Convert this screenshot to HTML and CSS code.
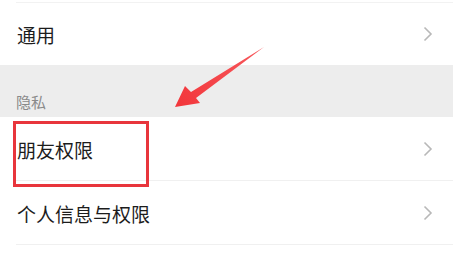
FILE: index.html
```html
<!DOCTYPE html>
<html lang="zh">
<head>
<meta charset="utf-8">
<link rel="stylesheet" href="styles.css">
</head>
<body>
<div class="page">
  <div class="top-gap"></div>
  <div class="row first">
    <span class="label">通用</span>
    <svg class="chev" width="10" height="16" viewBox="0 0 10 16"><polyline points="1.5,1.5 8,8 1.5,14.5" fill="none" stroke="#b8b8b8" stroke-width="1.6"/></svg>
  </div>
  <div class="section"><span>隐私</span></div>
  <div class="row">
    <span class="label">朋友权限</span>
    <svg class="chev" width="10" height="16" viewBox="0 0 10 16"><polyline points="1.5,1.5 8,8 1.5,14.5" fill="none" stroke="#b8b8b8" stroke-width="1.6"/></svg>
  </div>
  <div class="row">
    <span class="label">个人信息与权限</span>
    <svg class="chev" width="10" height="16" viewBox="0 0 10 16"><polyline points="1.5,1.5 8,8 1.5,14.5" fill="none" stroke="#b8b8b8" stroke-width="1.6"/></svg>
  </div>
  <div class="highlight"></div>
  <svg class="arrow" width="453" height="257" viewBox="0 0 453 257">
    <defs>
      <linearGradient id="g" x1="264" y1="47" x2="175" y2="107" gradientUnits="userSpaceOnUse">
        <stop offset="0" stop-color="#f7585c"/>
        <stop offset="1" stop-color="#f2363b"/>
      </linearGradient>
    </defs>
    <polygon points="175,107 185,86 191,92 264,47 196,98 200,103" fill="url(#g)"/>
  </svg>
</div>
</body>
</html>
```
FILE: styles.css
```css
html, body {
  margin: 0;
  padding: 0;
  background: #ffffff;
}
.page {
  position: relative;
  width: 453px;
  height: 257px;
  overflow: hidden;
  font-family: "Noto Sans CJK SC", "Noto Sans", sans-serif;
  color: #1c1c1c;
}
.top-gap {
  height: 2px;
  margin-left: 16px;
  border-bottom: 1px solid #f2f2f2;
}
.row {
  height: 64px;
  display: flex;
  align-items: center;
  justify-content: space-between;
  padding: 0 20px 0 17px;
  box-sizing: border-box;
  position: relative;
}
.row::after {
  content: "";
  position: absolute;
  left: 16px;
  right: 0;
  bottom: 0;
  height: 1px;
  background: #f0f0f0;
}
.row.first {
  height: 62px;
}
.row.first::after {
  display: none;
}
.label {
  font-size: 19px;
  line-height: 1;
}
.chev {
  display: block;
}
.section {
  height: 52px;
  background: #ededed;
  display: flex;
  align-items: flex-end;
  padding: 0 0 8px 16px;
  box-sizing: border-box;
}
.section span {
  font-size: 15px;
  color: #8a8a8a;
  line-height: 1;
}
.highlight {
  position: absolute;
  left: 13px;
  top: 121px;
  width: 136px;
  height: 66px;
  box-sizing: border-box;
  border: 3px solid #e8353c;
}
.arrow {
  position: absolute;
  left: 0;
  top: 0;
}
```
